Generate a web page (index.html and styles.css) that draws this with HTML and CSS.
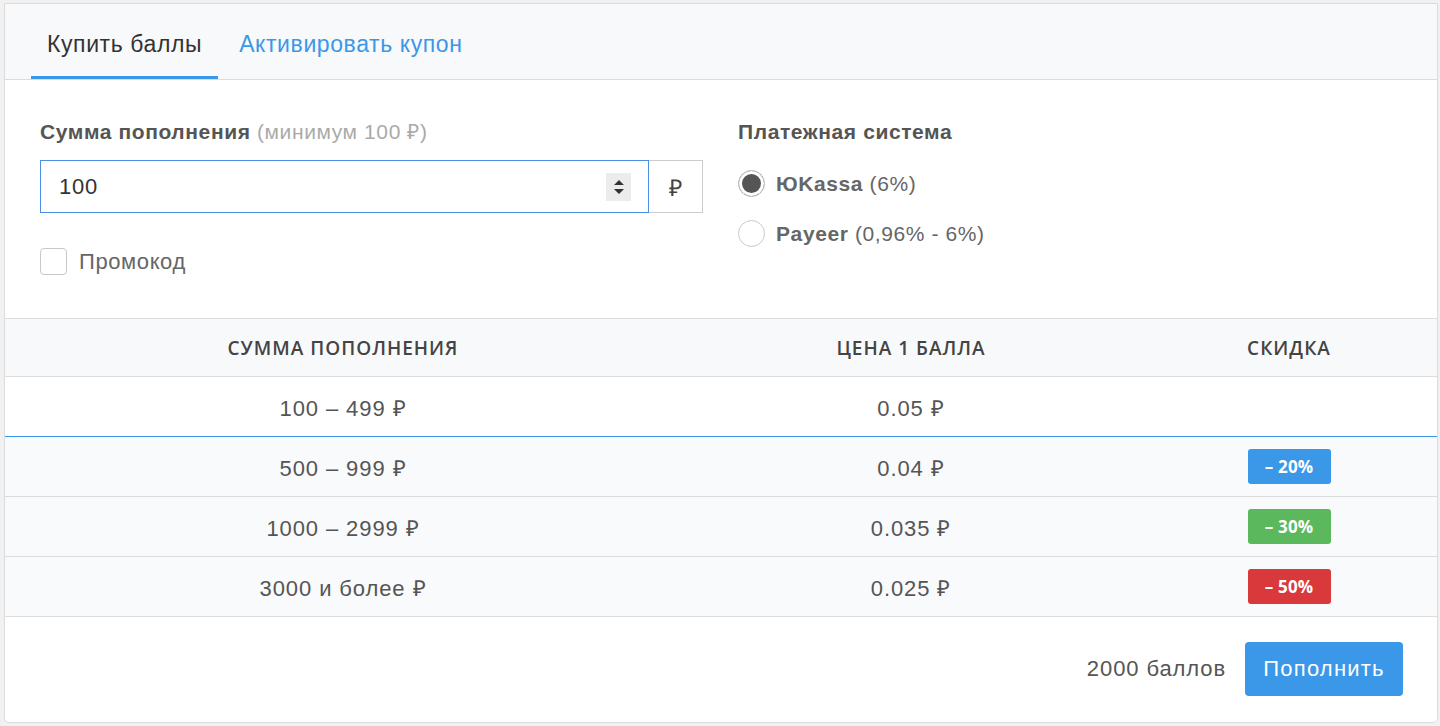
FILE: index.html
```html
<html>
<head>
<meta charset="utf-8">
<title>Пополнение баланса</title>
<link rel="stylesheet" href="styles.css">
</head>
<body>
<div class="card">
  <div class="tabs">
    <a class="tab active">Купить баллы</a>
    <a class="tab">Активировать купон</a>
  </div>

  <div class="topup">
    <div class="col">
      <div class="label">Сумма пополнения <span class="hint">(минимум 100 ₽)</span></div>
      <div class="input-group">
        <div class="input-box">
          <input type="text" value="100">
          <span class="spinner">
            <svg width="12" height="18" viewBox="0 0 12 18"><path d="M6 2 L11 7 H1 Z M1 11 H11 L6 16 Z" fill="#333"/></svg>
          </span>
        </div>
        <span class="addon">₽</span>
      </div>
      <label class="check">
        <span class="box"></span>
        <span>Промокод</span>
      </label>
    </div>
    <div class="col">
      <div class="label">Платежная система</div>
      <label class="radio"><span class="dot checked"></span><span><b>ЮKassa</b> (6%)</span></label>
      <label class="radio"><span class="dot"></span><span><b>Payeer</b> (0,96% - 6%)</span></label>
    </div>
  </div>

  <div class="prices">
    <div class="row head">
      <div>Сумма пополнения</div>
      <div>Цена 1 балла</div>
      <div>Скидка</div>
    </div>
    <div class="row current">
      <div>100 – 499 ₽</div>
      <div>0.05 ₽</div>
      <div></div>
    </div>
    <div class="row shaded">
      <div>500 – 999 ₽</div>
      <div>0.04 ₽</div>
      <div><span class="badge blue">– 20%</span></div>
    </div>
    <div class="row shaded">
      <div>1000 – 2999 ₽</div>
      <div>0.035 ₽</div>
      <div><span class="badge green">– 30%</span></div>
    </div>
    <div class="row shaded">
      <div>3000 и более ₽</div>
      <div>0.025 ₽</div>
      <div><span class="badge red">– 50%</span></div>
    </div>
  </div>

  <div class="footer">
    <span class="total">2000 баллов</span>
    <button type="button">Пополнить</button>
  </div>
</div>
</body>
</html>
```

FILE: styles.css
```css
body {
  margin: 0;
  padding: 3px 3px 3px 4px;
  background: #f1f1f1;
  font-family: "Liberation Sans", Arial, sans-serif;
  letter-spacing: 0.6px;
  color: #555;
}
.card {
  width: 1432px;
  background: #fff;
  border: 1px solid #dcdcdc;
  border-radius: 0 0 5px 5px;
  overflow: hidden;
}

/* tabs */
.tabs {
  display: flex;
  gap: 5px;
  height: 75px;
  padding-left: 26px;
  background: #f8f9fb;
  border-bottom: 1px solid #dcdcdc;
}
.tab {
  display: flex;
  align-items: center;
  padding: 8px 16px 0;
  font-size: 23px;
  color: #3b97e8;
  border-bottom: 3px solid transparent;
  cursor: pointer;
}
.tab.active {
  color: #333;
  border-bottom-color: #3b97e8;
}

/* amount + payment system */
.topup {
  display: grid;
  grid-template-columns: 663px 1fr;
  column-gap: 35px;
  padding: 40px 35px 43px;
  border-bottom: 1px solid #dcdcdc;
}
.label {
  font-size: 21px;
  line-height: 24px;
  font-weight: bold;
  color: #555;
  margin-bottom: 16px;
}
.hint {
  font-weight: normal;
  color: #aaa;
}
.input-group {
  display: flex;
  height: 53px;
}
.input-box {
  flex: 1;
  display: flex;
  align-items: center;
  border: 1px solid #4a90e2;
  padding: 0 17px 0 18px;
}
.input-box input {
  flex: 1;
  border: none;
  outline: none;
  font: 22px "Liberation Sans", Arial, sans-serif;
  letter-spacing: 0.8px;
  color: #333;
  padding: 0;
}
.spinner {
  display: flex;
  align-items: center;
  justify-content: center;
  width: 25px;
  height: 28px;
  background: #ececec;
}
.addon {
  display: flex;
  align-items: center;
  justify-content: center;
  width: 53px;
  border: 1px solid #ccc;
  border-left: none;
  font-size: 23px;
  color: #444;
}
.check {
  display: flex;
  align-items: center;
  gap: 12px;
  margin-top: 35px;
  height: 27px;
  font-size: 22px;
  color: #666;
}
.box {
  width: 25px;
  height: 25px;
  border: 1px solid #c8c8c8;
  border-radius: 4px;
}
.topup .col:last-child .label {
  margin-bottom: 26px;
}
.radio {
  display: flex;
  align-items: center;
  gap: 11px;
  height: 27px;
  margin-bottom: 23px;
  font-size: 21px;
  color: #666;
}
.radio b {
  color: #666;
}
.dot {
  width: 25px;
  height: 25px;
  border: 1px solid #c8c8c8;
  border-radius: 50%;
  box-sizing: content-box;
}
.dot.checked {
  background: #555;
  box-shadow: inset 0 0 0 3px #fff;
}

/* price table */
.row {
  display: grid;
  grid-template-columns: 676px 460px 1fr;
  height: 59px;
  border-bottom: 1px solid #dcdcdc;
  font-size: 22px;
  letter-spacing: 0.9px;
  color: #555;
}
.row > div {
  display: flex;
  align-items: center;
  justify-content: center;
}
.row.head {
  height: 57px;
  background: #f8f9fb;
  font-family: "Open Sans", sans-serif;
  font-weight: 600;
  font-size: 19px;
  letter-spacing: 1px;
  text-transform: uppercase;
  color: #444;
}
.row.current {
  border-bottom-color: #3b97e8;
}
.row.shaded {
  background: #f9fafc;
}
.badge {
  display: inline-block;
  width: 83px;
  height: 35px;
  line-height: 35px;
  border-radius: 3px;
  text-align: center;
  font-family: "Open Sans", sans-serif;
  font-weight: 700;
  font-size: 17px;
  letter-spacing: 0.2px;
  color: #fff;
}
.badge.blue { background: #3b97e8; }
.badge.green { background: #5cb85c; }
.badge.red { background: #d9393b; }

/* footer */
.footer {
  display: flex;
  justify-content: flex-end;
  align-items: center;
  gap: 19px;
  padding: 25px 34px 26px;
}
.total {
  font-size: 22px;
  letter-spacing: 0.9px;
  color: #555;
}
button {
  width: 158px;
  height: 54px;
  background: #3b97e8;
  color: #fff;
  border: none;
  border-radius: 4px;
  font: 22px "Liberation Sans", Arial, sans-serif;
  letter-spacing: 1.2px;
  cursor: pointer;
}
```
